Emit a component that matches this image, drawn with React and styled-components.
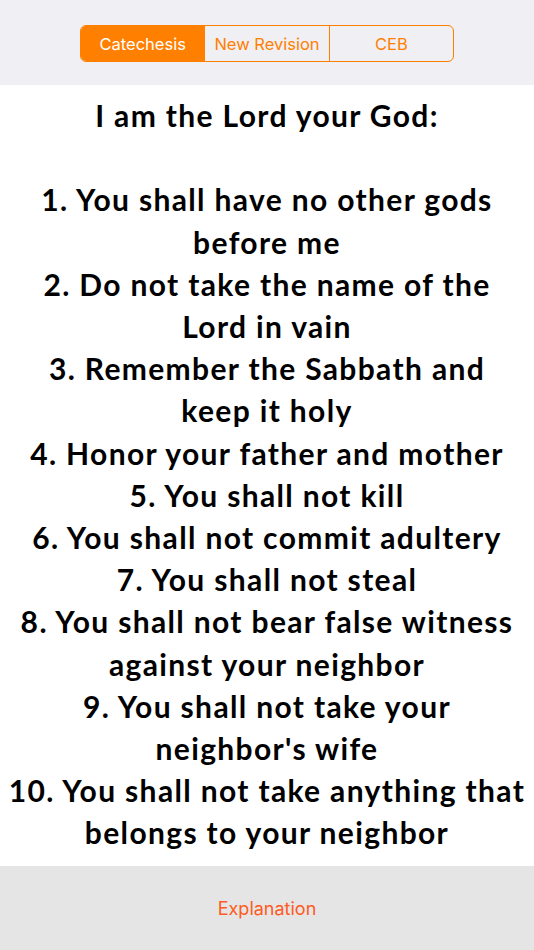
import React, { useState } from 'react'
import styled, { createGlobalStyle } from 'styled-components'

const GlobalStyle = createGlobalStyle`
    html, body {
        margin: 0;
        padding: 0;
        background: #ffffff;
    }
    * {
        box-sizing: border-box;
    }
`

const Screen = styled.div`
    width: 534px;
    height: 950px;
    display: flex;
    flex-direction: column;
    overflow: hidden;
`

const Header = styled.div`
    height: 85px;
    flex-shrink: 0;
    background: #efeff4;
    display: flex;
    justify-content: center;
    padding-top: 25px;
`

const Segmented = styled.div`
    display: flex;
    width: 374px;
    height: 37px;
    border: 1px solid #ff8000;
    border-radius: 6px;
    overflow: hidden;
`

const Segment = styled.button`
    flex: 1;
    border: none;
    border-left: ${(p) => (p.first ? 'none' : '1px solid #ff8000')};
    background: ${(p) => (p.active ? '#ff8000' : 'transparent')};
    color: ${(p) => (p.active ? '#ffffff' : '#ff8000')};
    font-family: Inter, 'Liberation Sans', sans-serif;
    font-size: 16.5px;
    padding: 0;
    cursor: pointer;
`

const Content = styled.div`
    flex: 1;
    padding: 9px 4px 0;
    text-align: center;
    font-family: Lato, 'Noto Sans', sans-serif;
    font-weight: 700;
    font-size: 30px;
    letter-spacing: 1.35px;
    line-height: 42.2px;
    color: #000000;
`

// each entry keeps the line break the screen uses
const Line = styled.div`
    white-space: pre-line;
`

const Footer = styled.div`
    height: 84px;
    flex-shrink: 0;
    background: #e5e5e5;
    display: flex;
    align-items: center;
    justify-content: center;
`

const FooterButton = styled.button`
    border: none;
    background: none;
    color: #ff5a1f;
    font-family: Inter, 'Liberation Sans', sans-serif;
    font-size: 18px;
    cursor: pointer;
`

const tabs = ['Catechesis', 'New Revision', 'CEB']

const commandments = [
    'You shall have no other gods\nbefore me',
    'Do not take the name of the\nLord in vain',
    'Remember the Sabbath and\nkeep it holy',
    'Honor your father and mother',
    'You shall not kill',
    'You shall not commit adultery',
    'You shall not steal',
    'You shall not bear false witness\nagainst your neighbor',
    "You shall not take your\nneighbor's wife",
    'You shall not take anything that\nbelongs to your neighbor',
]

const App = () => {
    const [tab, setTab] = useState(0)

    return (
        <Screen>
            <GlobalStyle />
            <Header>
                <Segmented>
                    {tabs.map((t, i) => (
                        <Segment
                            key={t}
                            first={i === 0}
                            active={i === tab}
                            onClick={() => setTab(i)}
                        >
                            {t}
                        </Segment>
                    ))}
                </Segmented>
            </Header>
            <Content>
                <Line>I am the Lord your God:</Line>
                <Line>&nbsp;</Line>
                {commandments.map((c, i) => (
                    <Line key={i}>
                        {i + 1}. {c}
                    </Line>
                ))}
            </Content>
            <Footer>
                <FooterButton>Explanation</FooterButton>
            </Footer>
        </Screen>
    )
}

export default App
